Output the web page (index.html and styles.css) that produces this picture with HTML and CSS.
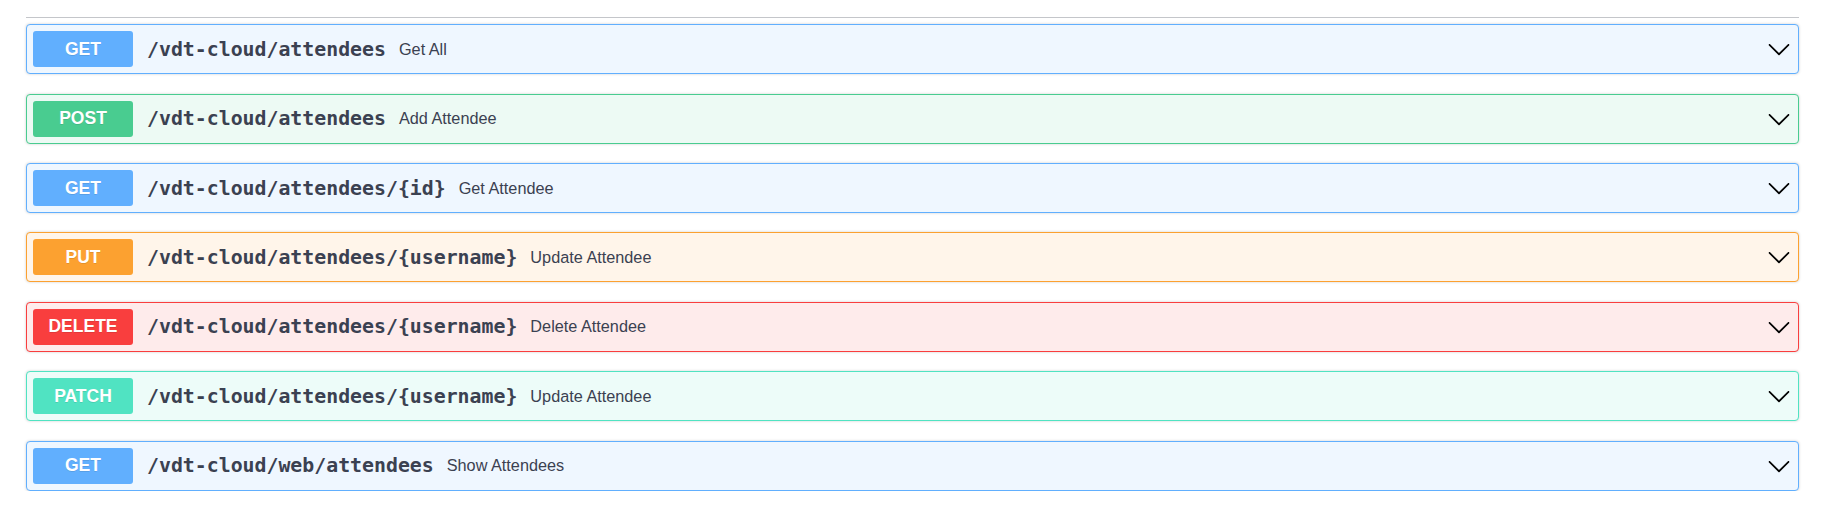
FILE: index.html
```html
<!DOCTYPE html>
<html lang="en">
<head>
<meta charset="utf-8">
<title>vdt-cloud API</title>
<link rel="stylesheet" href="styles.css">
</head>
<body>
<div class="wrapper">
  <div class="tag-line"></div>
  <div class="opblocks">
    <div class="opblock get">
      <span class="method">GET</span>
      <span class="path">/vdt-cloud/attendees</span>
      <span class="desc">Get All</span>
      <svg class="arrow" viewBox="0 0 20 20"><path d="M17.418 6.109c.272-.268.709-.268.979 0s.271.701 0 .969l-7.908 7.83c-.27.268-.707.268-.979 0l-7.908-7.83c-.27-.268-.27-.701 0-.969.271-.268.709-.268.979 0L10 13.25l7.418-7.141z"/></svg>
    </div>
    <div class="opblock post">
      <span class="method">POST</span>
      <span class="path">/vdt-cloud/attendees</span>
      <span class="desc">Add Attendee</span>
      <svg class="arrow" viewBox="0 0 20 20"><path d="M17.418 6.109c.272-.268.709-.268.979 0s.271.701 0 .969l-7.908 7.83c-.27.268-.707.268-.979 0l-7.908-7.83c-.27-.268-.27-.701 0-.969.271-.268.709-.268.979 0L10 13.25l7.418-7.141z"/></svg>
    </div>
    <div class="opblock get">
      <span class="method">GET</span>
      <span class="path">/vdt-cloud/attendees/{id}</span>
      <span class="desc">Get Attendee</span>
      <svg class="arrow" viewBox="0 0 20 20"><path d="M17.418 6.109c.272-.268.709-.268.979 0s.271.701 0 .969l-7.908 7.83c-.27.268-.707.268-.979 0l-7.908-7.83c-.27-.268-.27-.701 0-.969.271-.268.709-.268.979 0L10 13.25l7.418-7.141z"/></svg>
    </div>
    <div class="opblock put">
      <span class="method">PUT</span>
      <span class="path">/vdt-cloud/attendees/{username}</span>
      <span class="desc">Update Attendee</span>
      <svg class="arrow" viewBox="0 0 20 20"><path d="M17.418 6.109c.272-.268.709-.268.979 0s.271.701 0 .969l-7.908 7.83c-.27.268-.707.268-.979 0l-7.908-7.83c-.27-.268-.27-.701 0-.969.271-.268.709-.268.979 0L10 13.25l7.418-7.141z"/></svg>
    </div>
    <div class="opblock delete">
      <span class="method">DELETE</span>
      <span class="path">/vdt-cloud/attendees/{username}</span>
      <span class="desc">Delete Attendee</span>
      <svg class="arrow" viewBox="0 0 20 20"><path d="M17.418 6.109c.272-.268.709-.268.979 0s.271.701 0 .969l-7.908 7.83c-.27.268-.707.268-.979 0l-7.908-7.83c-.27-.268-.27-.701 0-.969.271-.268.709-.268.979 0L10 13.25l7.418-7.141z"/></svg>
    </div>
    <div class="opblock patch">
      <span class="method">PATCH</span>
      <span class="path">/vdt-cloud/attendees/{username}</span>
      <span class="desc">Update Attendee</span>
      <svg class="arrow" viewBox="0 0 20 20"><path d="M17.418 6.109c.272-.268.709-.268.979 0s.271.701 0 .969l-7.908 7.83c-.27.268-.707.268-.979 0l-7.908-7.83c-.27-.268-.27-.701 0-.969.271-.268.709-.268.979 0L10 13.25l7.418-7.141z"/></svg>
    </div>
    <div class="opblock get">
      <span class="method">GET</span>
      <span class="path">/vdt-cloud/web/attendees</span>
      <span class="desc">Show Attendees</span>
      <svg class="arrow" viewBox="0 0 20 20"><path d="M17.418 6.109c.272-.268.709-.268.979 0s.271.701 0 .969l-7.908 7.83c-.27.268-.707.268-.979 0l-7.908-7.83c-.27-.268-.27-.701 0-.969.271-.268.709-.268.979 0L10 13.25l7.418-7.141z"/></svg>
    </div>
  </div>
</div>
</body>
</html>
```

FILE: styles.css
```css
html, body {
  margin: 0;
  padding: 0;
  background: #ffffff;
}

.wrapper {
  padding: 16.5px 27px 0 26px;
  font-family: "Liberation Sans", Arial, sans-serif;
  color: #3b4151;
}

.tag-line {
  height: 1px;
  background: rgba(59, 65, 81, 0.3);
}

.opblocks {
  display: flex;
  flex-direction: column;
  gap: 19.4px;
  padding-top: 6.8px;
}

.opblock {
  display: flex;
  align-items: center;
  height: 50px;
  box-sizing: border-box;
  padding: 0 7px 0 6px;
  border: 1px solid;
  border-radius: 4px;
  box-shadow: 0 0 3px rgba(0, 0, 0, 0.19);
}

.method {
  flex: 0 0 100px;
  height: 36px;
  display: flex;
  align-items: center;
  justify-content: center;
  border-radius: 3px;
  color: #ffffff;
  font-weight: 700;
  font-size: 17.5px;
  text-shadow: 0 1px 0 rgba(0, 0, 0, 0.1);
}

.path {
  margin-left: 14px;
  font-family: "DejaVu Sans Mono", monospace;
  font-weight: 700;
  font-size: 19.85px;
  color: #3b4151;
}

.desc {
  margin-left: 13px;
  font-size: 16.25px;
  color: #3b4151;
  flex: 1;
}

.arrow {
  width: 24px;
  height: 24px;
  flex: 0 0 24px;
  fill: #000000;
}

.get { border-color: #61affe; background: #eff7ff; }
.get .method { background: #61affe; }

.post { border-color: #49cc90; background: #edfaf4; }
.post .method { background: #49cc90; }

.put { border-color: #fca130; background: #fff5ea; }
.put .method { background: #fca130; }

.delete { border-color: #f93e3e; background: #feebeb; }
.delete .method { background: #f93e3e; }

.patch { border-color: #50e3c2; background: #edfcf9; }
.patch .method { background: #50e3c2; }
```
